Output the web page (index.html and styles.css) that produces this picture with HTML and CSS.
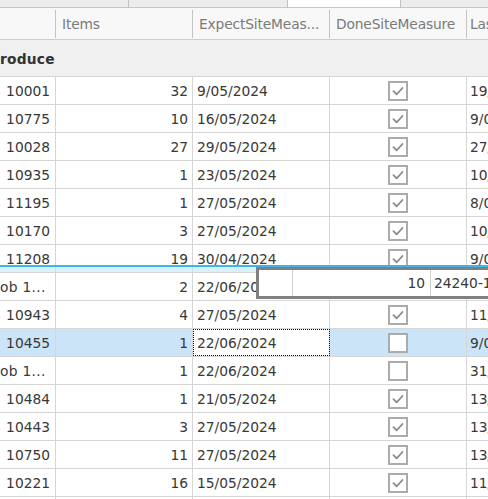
FILE: index.html
```html
<!DOCTYPE html>
<html>
<head>
<meta charset="utf-8">
<title>Grid</title>
<link rel="stylesheet" href="styles.css">
</head>
<body>
<div class="screen">
  <div class="tabs">
    <div class="tab tab-a"></div>
    <div class="tab tab-b"></div>
    <div class="tab tab-active"></div>
    <div class="tab tab-d"></div>
  </div>
  <div class="header">
    <div class="hc c0"></div>
    <div class="hc c1">Items</div>
    <div class="hc c2">ExpectSiteMeas...</div>
    <div class="hc c3">DoneSiteMeasure</div>
    <div class="hc c4">LastSiteMeasure</div>
  </div>
  <div class="group">roduce</div>

  <div class="row"><div class="cell c0">10001</div><div class="cell c1">32</div><div class="cell c2">9/05/2024</div><div class="cell c3"><svg class="cb" viewBox="0 0 20 20"><rect x="1" y="1" width="18" height="18"/><path d="M5.5 10.2 L8.6 13.3 L14.5 7"/></svg></div><div class="cell c4">19/04/2024</div></div>
  <div class="row"><div class="cell c0">10775</div><div class="cell c1">10</div><div class="cell c2">16/05/2024</div><div class="cell c3"><svg class="cb" viewBox="0 0 20 20"><rect x="1" y="1" width="18" height="18"/><path d="M5.5 10.2 L8.6 13.3 L14.5 7"/></svg></div><div class="cell c4">9/05/2024</div></div>
  <div class="row"><div class="cell c0">10028</div><div class="cell c1">27</div><div class="cell c2">29/05/2024</div><div class="cell c3"><svg class="cb" viewBox="0 0 20 20"><rect x="1" y="1" width="18" height="18"/><path d="M5.5 10.2 L8.6 13.3 L14.5 7"/></svg></div><div class="cell c4">27/05/2024</div></div>
  <div class="row"><div class="cell c0">10935</div><div class="cell c1">1</div><div class="cell c2">23/05/2024</div><div class="cell c3"><svg class="cb" viewBox="0 0 20 20"><rect x="1" y="1" width="18" height="18"/><path d="M5.5 10.2 L8.6 13.3 L14.5 7"/></svg></div><div class="cell c4">10/05/2024</div></div>
  <div class="row"><div class="cell c0">11195</div><div class="cell c1">1</div><div class="cell c2">27/05/2024</div><div class="cell c3"><svg class="cb" viewBox="0 0 20 20"><rect x="1" y="1" width="18" height="18"/><path d="M5.5 10.2 L8.6 13.3 L14.5 7"/></svg></div><div class="cell c4">8/05/2024</div></div>
  <div class="row"><div class="cell c0">10170</div><div class="cell c1">3</div><div class="cell c2">27/05/2024</div><div class="cell c3"><svg class="cb" viewBox="0 0 20 20"><rect x="1" y="1" width="18" height="18"/><path d="M5.5 10.2 L8.6 13.3 L14.5 7"/></svg></div><div class="cell c4">10/05/2024</div></div>
  <div class="row"><div class="cell c0">11208</div><div class="cell c1">19</div><div class="cell c2">30/04/2024</div><div class="cell c3"><svg class="cb" viewBox="0 0 20 20"><rect x="1" y="1" width="18" height="18"/><path d="M5.5 10.2 L8.6 13.3 L14.5 7"/></svg></div><div class="cell c4">9/05/2024</div></div>
  <div class="row"><div class="cell c0 trunc">ob 1...</div><div class="cell c1">2</div><div class="cell c2">22/06/2024</div><div class="cell c3"></div><div class="cell c4"></div></div>
  <div class="row"><div class="cell c0">10943</div><div class="cell c1">4</div><div class="cell c2">27/05/2024</div><div class="cell c3"><svg class="cb" viewBox="0 0 20 20"><rect x="1" y="1" width="18" height="18"/><path d="M5.5 10.2 L8.6 13.3 L14.5 7"/></svg></div><div class="cell c4">11/05/2024</div></div>
  <div class="row selected"><div class="cell c0">10455</div><div class="cell c1">1</div><div class="cell c2 focused">22/06/2024</div><div class="cell c3"><svg class="cb" viewBox="0 0 20 20"><rect x="1" y="1" width="18" height="18"/></svg></div><div class="cell c4">9/05/2024</div></div>
  <div class="row"><div class="cell c0 trunc">ob 1...</div><div class="cell c1">1</div><div class="cell c2">22/06/2024</div><div class="cell c3"><svg class="cb" viewBox="0 0 20 20"><rect x="1" y="1" width="18" height="18"/></svg></div><div class="cell c4">31/05/2024</div></div>
  <div class="row"><div class="cell c0">10484</div><div class="cell c1">1</div><div class="cell c2">21/05/2024</div><div class="cell c3"><svg class="cb" viewBox="0 0 20 20"><rect x="1" y="1" width="18" height="18"/><path d="M5.5 10.2 L8.6 13.3 L14.5 7"/></svg></div><div class="cell c4">13/05/2024</div></div>
  <div class="row"><div class="cell c0">10443</div><div class="cell c1">3</div><div class="cell c2">27/05/2024</div><div class="cell c3"><svg class="cb" viewBox="0 0 20 20"><rect x="1" y="1" width="18" height="18"/><path d="M5.5 10.2 L8.6 13.3 L14.5 7"/></svg></div><div class="cell c4">13/05/2024</div></div>
  <div class="row"><div class="cell c0">10750</div><div class="cell c1">11</div><div class="cell c2">27/05/2024</div><div class="cell c3"><svg class="cb" viewBox="0 0 20 20"><rect x="1" y="1" width="18" height="18"/><path d="M5.5 10.2 L8.6 13.3 L14.5 7"/></svg></div><div class="cell c4">13/05/2024</div></div>
  <div class="row"><div class="cell c0">10221</div><div class="cell c1">16</div><div class="cell c2">15/05/2024</div><div class="cell c3"><svg class="cb" viewBox="0 0 20 20"><rect x="1" y="1" width="18" height="18"/><path d="M5.5 10.2 L8.6 13.3 L14.5 7"/></svg></div><div class="cell c4">11/05/2024</div></div>
  <div class="row"><div class="cell c0">10390</div><div class="cell c1">5</div><div class="cell c2">27/05/2024</div><div class="cell c3"></div><div class="cell c4"></div></div>

  <div class="drop-line"></div>
  <div class="ghost">
    <div class="gc ga"></div>
    <div class="gc gb">10</div>
    <div class="gc gcx">24240-1001</div>
  </div>
</div>
</body>
</html>
```

FILE: styles.css
```css
* { box-sizing: border-box; }

html, body {
  margin: 0;
  padding: 0;
  background: #ffffff;
}

.screen {
  position: relative;
  width: 488px;
  height: 499px;
  overflow: hidden;
  font-family: "DejaVu Sans", "Liberation Sans", sans-serif;
  font-size: 13.8px;
  color: #383838;
  background: #ffffff;
}

/* tab strip */
.tabs {
  display: flex;
  height: 8px;
  border-bottom: 1px solid #c6c6c6;
  background: #ececec;
}
.tab {
  height: 100%;
  border-right: 1px solid #c2c2c2;
}
.tab-a { width: 129px; }
.tab-b { width: 159px; }
.tab-active { width: 113px; background: #ffffff; }
.tab-d { flex: 1; border-right: none; }

/* header */
.header {
  display: grid;
  grid-template-columns: 56px 137px 137px 137px 1fr;
  height: 32px;
  background: #f8f8f8;
  border-bottom: 1px solid #cccccc;
  color: #7a7a7a;
}
.hc {
  height: 28px;
  margin-top: 2px;
  display: flex;
  align-items: center;
  padding-left: 6px;
  white-space: nowrap;
  overflow: hidden;
  border-right: 1px solid #c4c4c4;
  letter-spacing: -0.15px;
}
.hc.c4 { border-right: none; padding-left: 3px; }

/* group row */
.group {
  height: 37px;
  background: #f0f0f0;
  border-bottom: 1px solid #d6d6d6;
  font-weight: bold;
  color: #333333;
  display: flex;
  align-items: center;
  padding-top: 2px;
  white-space: nowrap;
  letter-spacing: 0.2px;
}

/* data rows */
.row {
  display: grid;
  grid-template-columns: 56px 137px 137px 137px 1fr;
  height: 28px;
  border-bottom: 1px solid #d6d6d6;
}
.cell {
  height: 27px;
  display: flex;
  align-items: center;
  white-space: nowrap;
  overflow: hidden;
  border-right: 1px solid #d6d6d6;
}
.cell.c0 { justify-content: flex-end; padding-right: 5px; }
.cell.c0.trunc { justify-content: flex-start; padding-left: 0; letter-spacing: 0.3px; }
.cell.c1 { justify-content: flex-end; padding-right: 4px; }
.cell.c2 { padding-left: 4px; }
.cell.c3 { justify-content: center; }
.cell.c4 { padding-left: 3px; border-right: none; }

.selected .cell { background: #cce4f7; }
.selected .cell.focused {
  background: #ffffff;
  outline: 1px dotted #111111;
  outline-offset: -1px;
}

.cb {
  width: 20px;
  height: 20px;
  display: block;
}
.cb rect {
  fill: #ffffff;
  stroke: #ababab;
  stroke-width: 2;
}
.cb path {
  fill: none;
  stroke: #8a8a8a;
  stroke-width: 1.8;
  stroke-linecap: round;
  stroke-linejoin: round;
}

/* drag-and-drop indicators */
.drop-line {
  position: absolute;
  left: 0;
  right: 0;
  top: 265px;
  height: 7px;
  border-top: 2px solid #3db5e8;
  background: rgba(190, 232, 250, 0.6);
}

.ghost {
  position: absolute;
  left: 256px;
  top: 267px;
  width: 260px;
  height: 32px;
  border: 3px solid #808080;
  background: #ffffff;
  display: grid;
  grid-template-columns: 34px 138px 1fr;
}
.gc {
  display: flex;
  align-items: center;
  white-space: nowrap;
  overflow: hidden;
  border-right: 1px solid #d0d0d0;
}
.gb { justify-content: flex-end; padding-right: 5px; }
.gcx { padding-left: 3px; border-right: none; }
```
